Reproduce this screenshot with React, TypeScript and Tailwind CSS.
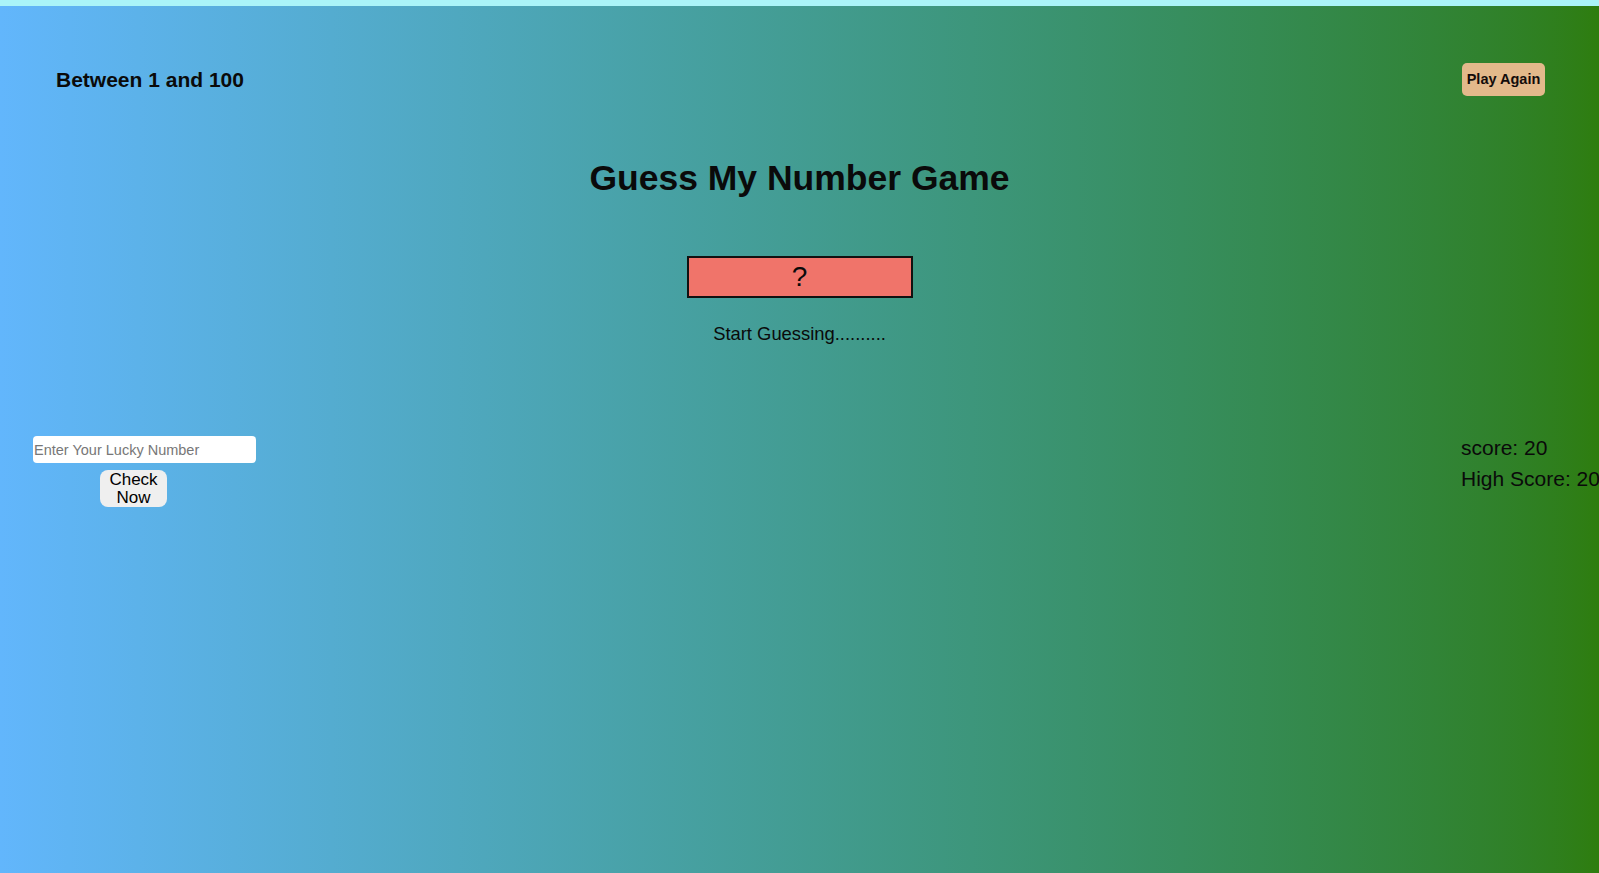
import { useState } from "react";

export default function App() {
  const [guess, setGuess] = useState("");
  const score = 20;
  const highScore = 20;

  return (
    <div className="min-h-screen w-full overflow-hidden bg-linear-to-r from-[#62b6fc] to-[#2e7d0e] font-['Liberation_Sans',Arial,sans-serif] text-[#0a0a0a]">
      <div className="h-[6px] bg-[#aaf4f8]" />

      {/* header */}
      <header className="mt-[57px] flex h-[33px] items-center justify-between pl-[56px] pr-[54px]">
        <h3 className="text-[21px] font-bold leading-none">Between 1 and 100</h3>
        <button className="h-[33px] w-[83px] rounded-[5px] bg-[#e3b98b] text-[14.5px] font-bold leading-none text-[#140c0a]">
          Play Again
        </button>
      </header>

      <main className="flex flex-col items-center">
        <h1 className="mt-[64px] text-[35.5px] font-bold leading-[36px]">
          Guess My Number Game
        </h1>
        <div className="mt-[60px] flex h-[42px] w-[226px] items-center justify-center border-2 border-[#111] bg-[#f0746a] text-[28px] leading-none">
          ?
        </div>
        <p className="mt-[27px] text-[18.4px] leading-none">Start Guessing..........</p>
      </main>

      <section className="mt-[92px] flex items-start">
        <div className="ml-[33px] flex flex-col pt-[1px]">
          <input
            type="number"
            value={guess}
            onChange={(e) => setGuess(e.target.value)}
            placeholder="Enter Your Lucky Number"
            className="h-[27px] w-[223px] rounded-[4px] bg-white pl-[1px] text-[14.5px] text-black outline-none placeholder:text-[#777]"
          />
          <button className="ml-[67px] mt-[7px] h-[37px] w-[67px] rounded-[8px] bg-[#efefef] px-[8px] text-[17px] leading-[18px] text-black">
            Check Now
          </button>
        </div>
        <div className="flex-1" />
        <div className="-mt-[3px] w-[138px] whitespace-nowrap text-[21px] leading-[31px]">
          <p>score: {score}</p>
          <p>High Score: {highScore}</p>
        </div>
      </section>
    </div>
  );
}
